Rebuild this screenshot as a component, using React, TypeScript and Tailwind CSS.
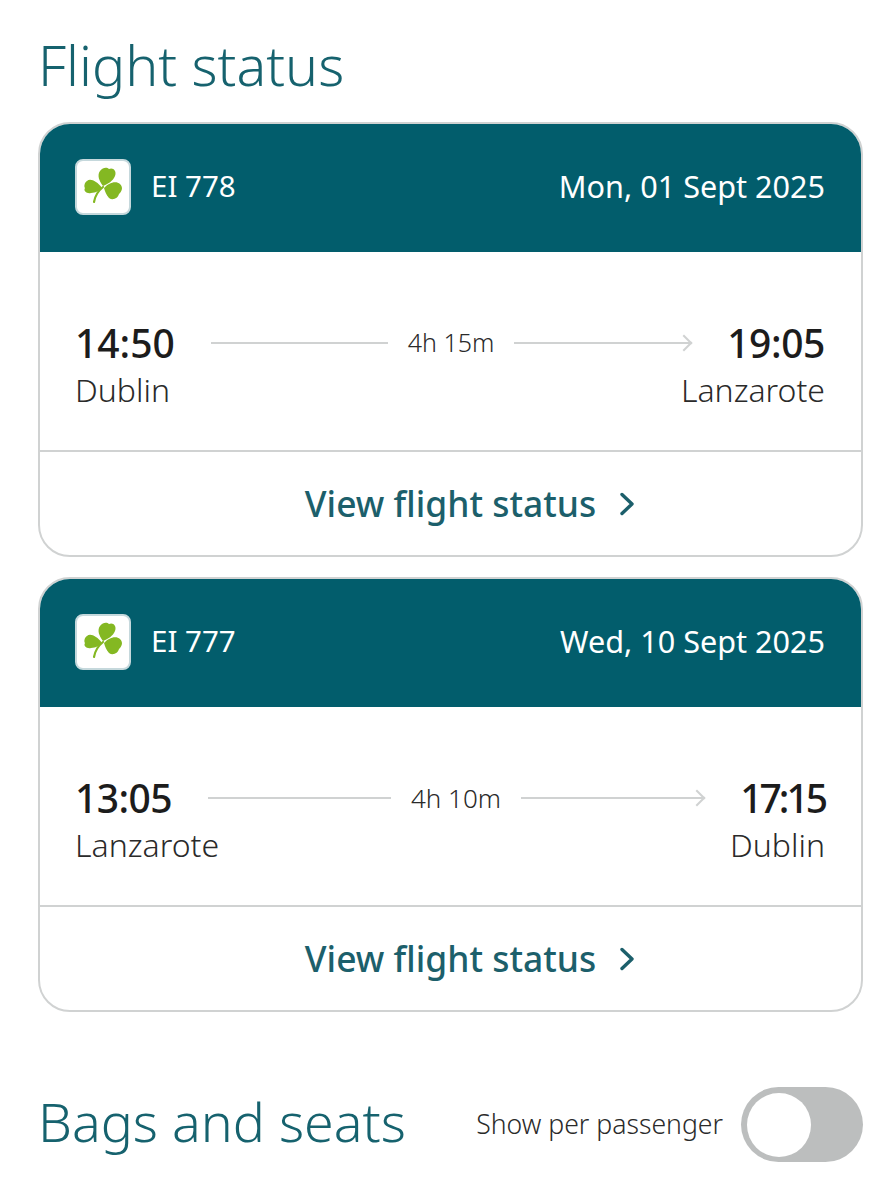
const font = "font-['Noto_Sans','Open_Sans',sans-serif]";

function Shamrock() {
  return (
    <svg viewBox="2 2 52 52" className="h-[52px] w-[52px]">
      <path d="M28 27C24 22 22 16 25 12C28 8 32 8 34 10C38 8 42 12 40 17C38 22 33 25 28 27Z" fill="#84b822" />
      <path d="M27 29C22 22 15 19 12 22C9 24 9 28 10 29C8 32 12 35 16 34C21 34 25 31 27 29Z" fill="#84b822" />
      <path d="M29 29C33 24 41 21 45 25C49 29 46 33 44 35C43 39 38 42 34 39C31 36 30 32 29 29Z" fill="#84b822" />
      <path d="M28 28C23 32 20 37 19 43" fill="none" stroke="#84b822" strokeWidth="2.2" strokeLinecap="round" />
    </svg>
  );
}

function FlightCard({
  number,
  date,
  depart,
  arrive,
  from,
  to,
  duration,
  departClass,
  arriveClass,
  durationClass,
}: {
  number: string;
  date: string;
  depart: string;
  arrive: string;
  from: string;
  to: string;
  duration: string;
  departClass: string;
  arriveClass: string;
  durationClass: string;
}) {
  return (
    <div className="overflow-hidden rounded-[32px] border-2 border-[#d0d2d2] bg-white">
      <div className="flex h-[128px] items-center justify-between bg-[#025d6c] pb-[2px] pl-[35px] pr-[36px] text-white">
        <div className="flex items-center gap-[20px]">
          <div className="flex h-[56px] w-[56px] items-center justify-center rounded-[8px] border-2 border-[#c5d8dc] bg-white">
            <Shamrock />
          </div>
          <span className="mb-[2px] text-[29.5px] leading-none">{number}</span>
        </div>
        <span className="mb-[2px] text-[30.6px] leading-none">{date}</span>
      </div>
      <div className="h-[200px] border-b-2 border-[#d0d2d2] pl-[35px] pr-[36px] pt-[67px]">
        <div className="flex h-[48px] items-center">
          <span className={`text-[39px] font-medium leading-[48px] text-[#1c1c1c] ${departClass}`}>{depart}</span>
          <div className="flex flex-1 items-center px-[36px]">
            <div className="h-[2px] flex-1 bg-[#d0d2d2]" />
            <span className={`mx-[20px] whitespace-nowrap font-light text-[#2a2a2a] ${durationClass}`}>{duration}</span>
            <div className="relative h-[2px] flex-1 bg-[#d0d2d2]">
              <div className="absolute right-[1px] top-[-5px] h-[12px] w-[12px] rotate-45 border-r-2 border-t-2 border-[#d0d2d2]" />
            </div>
          </div>
          <span className={`text-[39px] font-medium leading-[48px] text-[#1c1c1c] ${arriveClass}`}>{arrive}</span>
        </div>
        <div className="mt-[2px] flex justify-between">
          <span className="text-[32px] font-light leading-[42px] text-[#2a2a2a]">{from}</span>
          <span className="text-[32px] font-light leading-[42px] text-[#2a2a2a]">{to}</span>
        </div>
      </div>
      <div className="flex h-[103px] items-center justify-center gap-[24px] pl-[38px] text-[#1c5f6b]">
        <span className="text-[35.4px] font-medium leading-none">View flight status</span>
        <svg viewBox="0 0 14 24" className="h-[24px] w-[14px]" fill="none" stroke="#1c5f6b" strokeWidth="3.4" strokeLinecap="round" strokeLinejoin="round">
          <path d="M2 2.5l10 9.5-10 9.5" />
        </svg>
      </div>
    </div>
  );
}

export default function App() {
  return (
    <div className={`h-[1200px] w-[878px] overflow-hidden bg-white pl-[38px] pr-[15px] ${font}`}>
      <h1 className="pt-[34px] text-[55.5px] font-light leading-[62px] text-[#16626e]">Flight status</h1>
      <div className="mt-[26px] flex flex-col gap-[20px]">
        <FlightCard
          number="EI 778"
          date="Mon, 01 Sept 2025"
          depart="14:50"
          arrive="19:05"
          from="Dublin"
          to="Lanzarote"
          duration="4h 15m"
          departClass=""
          arriveClass="tracking-[-0.4px]"
          durationClass="text-[25px]"
        />
        <FlightCard
          number="EI 777"
          date="Wed, 10 Sept 2025"
          depart="13:05"
          arrive="17:15"
          from="Lanzarote"
          to="Dublin"
          duration="4h 10m"
          departClass="tracking-[-0.6px]"
          arriveClass="tracking-[-3px]"
          durationClass="text-[26px]"
        />
      </div>
      <div className="mt-[75px] flex items-center justify-between">
        <h2 className="mb-[6px] text-[53.7px] font-light leading-[62px] text-[#16626e]">Bags and seats</h2>
        <div className="flex items-center gap-[18px]">
          <span className="text-[26.6px] font-light text-[#2a2a2a]">Show per passenger</span>
          <div className="flex h-[75px] w-[122px] items-center rounded-full bg-[#bcbebe] pl-[6px]">
            <div className="h-[64px] w-[64px] rounded-full bg-white" />
          </div>
        </div>
      </div>
    </div>
  );
}
